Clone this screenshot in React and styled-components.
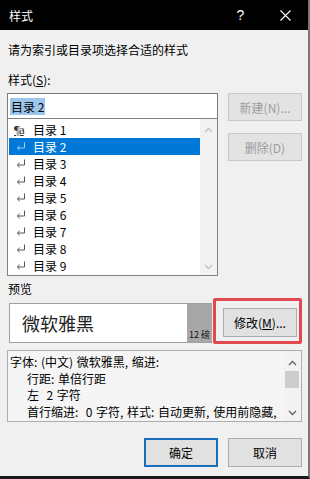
import styled, { createGlobalStyle } from "styled-components";

const GlobalStyle = createGlobalStyle`
  html, body { margin: 0; padding: 0; }
  body {
    font-family: "Noto Sans CJK SC", "Noto Sans", sans-serif;
    font-size: 12px;
    color: #000;
  }
  * { box-sizing: border-box; }
`;

const Window = styled.div`
  width: 310px;
  height: 479px;
  background: #f0f0f0;
  display: flex;
  flex-direction: column;
  border-right: 2px solid #777;
  border-bottom: 3px solid #1a1a1a;
  overflow: hidden;
`;

const TitleBar = styled.div`
  height: 30px;
  flex-shrink: 0;
  background: #000;
  color: #fff;
  display: flex;
  align-items: center;
  padding-left: 9px;
`;

const TitleText = styled.span`
  line-height: 17px;
`;

const TitleButtons = styled.div`
  margin-left: auto;
  display: flex;
  height: 100%;
`;

const TitleButton = styled.div`
  width: 45px;
  height: 100%;
  display: flex;
  align-items: center;
  justify-content: center;
  font-family: "Liberation Sans", sans-serif;
  font-size: 14px;
`;

const Content = styled.div`
  flex: 1;
  display: flex;
  flex-direction: column;
  padding: 0 6px 0 7px;
`;

const Label = styled.div`
  line-height: 17px;
  padding-left: ${(p) => p.$indent || 1}px;
  margin-top: ${(p) => p.$top || 0}px;
`;

const Key = styled.span`
  text-decoration: underline;
`;

const MainRow = styled.div`
  display: flex;
  gap: 10px;
  margin-top: 5px;
`;

const LeftCol = styled.div`
  width: 211px;
  display: flex;
  flex-direction: column;
`;

const RightCol = styled.div`
  width: 74px;
  display: flex;
  flex-direction: column;
  gap: 12px;
`;

const Input = styled.div`
  height: 26px;
  border: 1px solid #7a7a7a;
  background: #fff;
  display: flex;
  align-items: center;
  padding-left: 2px;
`;

const Selected = styled.span`
  background: #9cc6ec;
  line-height: 17px;
  padding: 0 1px;
`;

const List = styled.div`
  height: 158px;
  margin-top: -1px;
  border: 1px solid #828282;
  background: #fff;
  display: flex;
`;

const Items = styled.div`
  flex: 1;
  padding: 2px 0 0 1px;
  display: flex;
  flex-direction: column;
`;

const Item = styled.div`
  height: 17px;
  display: flex;
  align-items: center;
  background: ${(p) => (p.$active ? "#0078d7" : "transparent")};
  color: ${(p) => (p.$active ? "#fff" : "#000")};
`;

const ItemIcon = styled.span`
  width: 24px;
  height: 17px;
  padding-left: 7px;
  display: flex;
  align-items: center;
  color: ${(p) => (p.$active ? "#9fcff5" : "#555")};
`;

const ParaMark = styled.span`
  font-family: "Liberation Serif", serif;
  font-size: 13px;
  line-height: 13px;
  text-decoration: underline;
  color: #333;
  margin-left: -2px;
  letter-spacing: -1px;
`;

const ItemText = styled.span`
  line-height: 17px;
`;

const ScrollTrack = styled.div`
  width: ${(p) => p.$w}px;
  background: #f2f2f2;
  display: flex;
  flex-direction: column;
  padding-top: ${(p) => p.$top || 0}px;
`;

const Arrow = styled.div`
  height: ${(p) => p.$h}px;
  display: flex;
  align-items: center;
  justify-content: center;
`;

const Thumb = styled.div`
  height: 17px;
  margin: 0 1px;
  background: #cdcdcd;
`;

const Spacer = styled.div`
  flex: 1;
`;

const Button = styled.div`
  width: 74px;
  height: ${(p) => p.$h || 28}px;
  flex-shrink: 0;
  display: flex;
  align-items: center;
  justify-content: center;
  background: ${(p) => (p.$disabled ? "#e3e3e3" : "#e1e1e1")};
  border: ${(p) =>
    p.$primary ? "2px solid #1a6db8" : p.$disabled ? "1px solid #c8c8c8" : "1px solid #adadad"};
  color: ${(p) => (p.$disabled ? "#9c9c9c" : "#000")};
  line-height: 17px;
`;

const PreviewRow = styled.div`
  display: flex;
  align-items: flex-start;
  margin-top: 1px;
`;

const PreviewBox = styled.div`
  width: 208px;
  height: 40px;
  margin: 5px 1px 0 2px;
  border: 1px solid #a0a0a0;
  border-right: none;
  background: #fff;
  display: flex;
`;

const PreviewFont = styled.div`
  flex: 1;
  display: flex;
  align-items: center;
  padding-left: 12px;
  font-size: 18px;
  color: #222;
`;

const SizeStrip = styled.div`
  width: 25px;
  background: #a7a7a7;
  display: flex;
  align-items: flex-end;
  justify-content: center;
  font-size: 9px;
  line-height: 12px;
  padding-bottom: 1px;
  color: #111;
`;

const Highlight = styled.div`
  width: 89px;
  height: 46px;
  flex-shrink: 0;
  border: 3px solid #e2494e;
  border-radius: 2px;
  padding: 7px 0 0 7px;
`;

const Description = styled.div`
  height: 72px;
  margin-top: 6px;
  border: 1px solid #adadad;
  background: #f5f5f5;
  display: flex;
  padding-right: 1px;
`;

const DescText = styled.div`
  flex: 1;
  padding: 3px 0 0 1px;
  white-space: nowrap;
  overflow: hidden;
  word-spacing: 1px;
`;

const DescLine = styled.div`
  line-height: 16.5px;
  padding-left: ${(p) => (p.$indent ? 18 : 1)}px;
`;

const Footer = styled.div`
  display: flex;
  justify-content: flex-end;
  gap: 10px;
  margin-top: 16px;
`;

const Chevron = ({ up, color }) => (
  <svg width="9" height="6" viewBox="0 0 9 6">
    <polyline
      points={up ? "1,5 4.5,1.5 8,5" : "1,1 4.5,4.5 8,1"}
      fill="none"
      stroke={color}
      strokeWidth="1.3"
    />
  </svg>
);

const ReturnMark = () => (
  <svg width="10" height="9" viewBox="0 0 10 9">
    <path d="M8.5 0.5 V6 H1.5" fill="none" stroke="currentColor" strokeWidth="1" />
    <path d="M3.7 3.7 L1.3 6 L3.7 8.3" fill="none" stroke="currentColor" strokeWidth="1" />
  </svg>
);

const CloseMark = () => (
  <svg width="11" height="11" viewBox="0 0 11 11">
    <path d="M0.5 0.5 L10.5 10.5 M10.5 0.5 L0.5 10.5" stroke="#fff" strokeWidth="1.1" />
  </svg>
);

const entries = [1, 2, 3, 4, 5, 6, 7, 8, 9];

export default function App() {
  return (
    <>
      <GlobalStyle />
      <Window>
        <TitleBar>
          <TitleText>样式</TitleText>
          <TitleButtons>
            <TitleButton>?</TitleButton>
            <TitleButton>
              <CloseMark />
            </TitleButton>
          </TitleButtons>
        </TitleBar>
        <Content>
          <Label $top={11}>请为索引或目录项选择合适的样式</Label>
          <Label $top={13}>
            样式(<Key>S</Key>):
          </Label>
          <MainRow>
            <LeftCol>
              <Input>
                <Selected>目录 2</Selected>
              </Input>
              <List>
                <Items>
                  {entries.map((n) => (
                    <Item key={n} $active={n === 2}>
                      <ItemIcon $active={n === 2}>
                        {n === 1 ? <ParaMark>¶a</ParaMark> : <ReturnMark />}
                      </ItemIcon>
                      <ItemText>目录 {n}</ItemText>
                    </Item>
                  ))}
                </Items>
                <ScrollTrack $w={17} $top={2}>
                  <Arrow $h={17}>
                    <Chevron up color="#c2c2c2" />
                  </Arrow>
                  <Spacer />
                  <Arrow $h={17}>
                    <Chevron color="#c2c2c2" />
                  </Arrow>
                </ScrollTrack>
              </List>
            </LeftCol>
            <RightCol>
              <Button $disabled>新建(N)...</Button>
              <Button $disabled>删除(D)</Button>
            </RightCol>
          </MainRow>
          <Label $top={4}>预览</Label>
          <PreviewRow>
            <PreviewBox>
              <PreviewFont>微软雅黑</PreviewFont>
              <SizeStrip>12 磅</SizeStrip>
            </PreviewBox>
            <Highlight>
              <Button $h={29}>
                修改(<Key>M</Key>)...
              </Button>
            </Highlight>
          </PreviewRow>
          <Description>
            <DescText>
              <DescLine>字体: (中文) 微软雅黑, 缩进:</DescLine>
              <DescLine $indent>行距: 单倍行距</DescLine>
              <DescLine $indent>左&nbsp;&nbsp;2 字符</DescLine>
              <DescLine $indent>首行缩进:&nbsp;&nbsp;0 字符, 样式: 自动更新, 使用前隐藏,</DescLine>
            </DescText>
            <ScrollTrack $w={16} $top={4}>
              <Arrow $h={16}>
                <Chevron up color="#606060" />
              </Arrow>
              <Thumb />
              <Spacer />
              <Arrow $h={16}>
                <Chevron color="#606060" />
              </Arrow>
            </ScrollTrack>
          </Description>
          <Footer>
            <Button $h={29} $primary>
              确定
            </Button>
            <Button $h={29}>取消</Button>
          </Footer>
        </Content>
      </Window>
    </>
  );
}
